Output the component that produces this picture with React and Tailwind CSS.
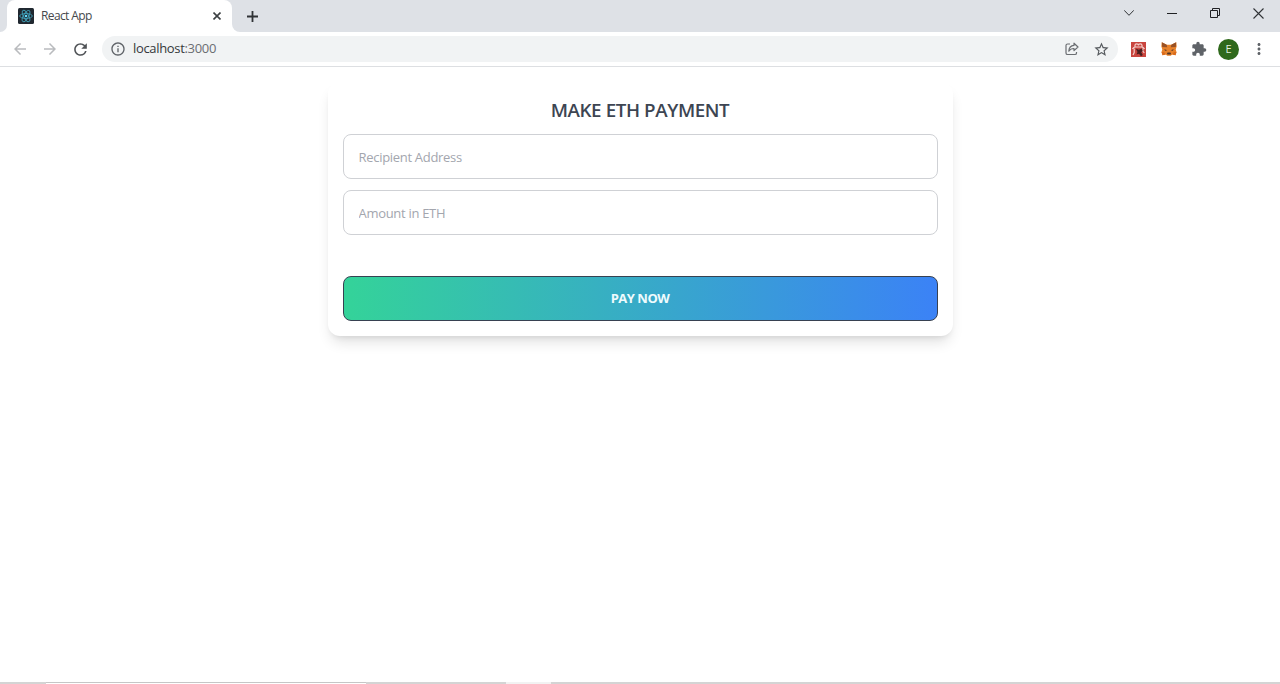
import {
  MdArrowBack, MdArrowForward, MdRefresh, MdInfoOutline, MdStarBorder,
  MdExtension, MdMoreVert,
} from "react-icons/md";

function ReactFavicon() {
  return (
    <svg width="16" height="16" viewBox="0 0 16 16" className="shrink-0">
      <rect width="16" height="16" rx="1.5" fill="#202830" />
      <g fill="none" stroke="#3f9db5" strokeWidth="0.9">
        <ellipse cx="8" cy="8" rx="6.3" ry="2.5" />
        <ellipse cx="8" cy="8" rx="6.3" ry="2.5" transform="rotate(60 8 8)" />
        <ellipse cx="8" cy="8" rx="6.3" ry="2.5" transform="rotate(120 8 8)" />
      </g>
      <circle cx="8" cy="8" r="1.3" fill="#61dafb" />
    </svg>
  );
}

function ShareIcon() {
  return (
    <svg width="14" height="14" viewBox="0 0 14 14" fill="none" stroke="#6a6d71" strokeWidth="1.2" strokeLinejoin="round">
      <path d="M5 2H2.6Q1 2 1 3.6v7.3q0 1.6 1.6 1.6h7.3q1.6 0 1.6-1.6V10" />
      <path d="M9 1.2 13 5 9 8.6V6.5C6.6 6.5 5 7.3 3.8 9.2 4 6 5.700 3.700 9 3.400Z" />
    </svg>
  );
}

function RedExtension() {
  return (
    <svg width="15" height="15" viewBox="0 0 15 15">
      <rect width="15" height="15" fill="#c9453e" />
      <g fill="none" stroke="#f3cfcb" strokeWidth="1.2">
        <path d="M4 5V3.300q0-1.500 1.700-1.500T7.500 3.500Q7.500 1.800 9.200 1.800T11 3.300V5" />
        <path d="M1.500 7q1-2 3-2h6q2 0 3 2M3.200 6.500v4l-1.200 2.500M11.800 6.500v2.500l1.500 2" />
      </g>
      <path d="m4.800 6.500 3 1.200 3.200-1.200.7 2.500-1.500 1.200 1.600 2.800-1.800 1.300-2-2.500-2.500.6 1-2.500Z" fill="#4a2020" />
    </svg>
  );
}

function FoxIcon() {
  return (
    <svg width="16" height="14" viewBox="0 0 16 14">
      <path d="m.8.3 4.900 2.400h4.600L15.200.3l.5 4-1 3.200.8 2.500-1 3.300-3.200-.8-1.600 1.200H6.300l-1.600-1.200-3.200.8-1-3.300.8-2.500-1-3.200Z" fill="#e8822b" />
      <path d="m.8.3 4.900 2.400.5 2.500-5-.2ZM15.200.3l-4.900 2.400-.5 2.500 5-.2Z" fill="#985125" />
      <path d="m3.300 7 3 1.200-2.200.8ZM12.700 7l-3 1.200 2.200.8Z" fill="#6e4429" />
      <path d="m6 11.200.7-.6h2.600l.7.600-.3 1.400H6.300Z" fill="#53392b" />
      <path d="m1.500 13.300 3.200-.8-1.500-2.300-2.700-.2ZM14.500 13.300l-3.200-.8 1.500-2.300 2.700-.2Z" fill="#d96b1d" />
    </svg>
  );
}

function TitleBar() {
  return (
    <div className="flex h-8 bg-[#dee1e6]">
      <div className="flex w-[7px] bg-white"><div className="w-full rounded-br-lg bg-[#dee1e6]" /></div>
      <div className="flex w-[225px] items-center rounded-t-lg bg-white pr-[11px] pl-[11px]">
        <ReactFavicon />
        <span className="ml-[7px] flex-1 text-[12px] tracking-[-0.62px] text-[#45484c]">React App</span>
        <svg width="8" height="8" viewBox="0 0 8 8" stroke="#3c4043" strokeWidth="1.600"><path d="m.5.5 7 7M7.500.5l-7 7" /></svg>
      </div>
      <div className="flex w-2 bg-white"><div className="w-full rounded-bl-lg bg-[#dee1e6]" /></div>
      <div className="flex w-[25px] items-center justify-center">
        <svg width="11" height="11" viewBox="0 0 11 11" stroke="#303336" strokeWidth="1.800"><path d="M5.500 0v11M0 5.500h11" /></svg>
      </div>
      <div className="flex flex-1 items-center justify-end gap-[33px] pr-4 pb-1.5">
        <svg width="10" height="10" viewBox="0 0 10 10" fill="none" stroke="#303336"><path d="m.2 2.300 4.800 5 4.800-5" /></svg>
        <svg width="10" height="10" viewBox="0 0 10 10" fill="none" stroke="#202124"><path d="M0 5.500h10" /></svg>
        <svg width="10" height="10" viewBox="0 0 10 10" fill="none" stroke="#202124"><path d="M.5 2.500h7v7h-7zM2.500 2.500v-2h7v7h-2" /></svg>
        <svg width="11" height="11" viewBox="0 0 11 11" fill="none" stroke="#303336" strokeWidth="1.100"><path d="m.5.5 10 10M10.500.5l-10 10" /></svg>
      </div>
    </div>
  );
}

function Toolbar() {
  return (
    <div className="flex h-[35px] items-center border-b border-[#dddfe2] bg-white pr-3">
      <div className="flex w-[102px] items-center gap-3 pl-[11px]">
        <MdArrowBack size={18} color="#b9bbbe" />
        <MdArrowForward size={18} color="#b9bbbe" />
        <MdRefresh size={19} color="#505357" />
      </div>
      <div className="flex h-[26px] w-[1017px] items-center rounded-full bg-[#f1f3f4] pr-2 pl-2">
        <MdInfoOutline size={16} color="#5f6368" />
        <span className="ml-[7px] flex-1 text-[13px] tracking-[-0.32px] text-[#35383b]">
          localhost<span className="text-[#6b6e72]">:3000</span>
        </span>
        <ShareIcon />
        <MdStarBorder size={17} color="#55595d" className="ml-[14px]" />
      </div>
      <div className="flex flex-1 items-center pl-[13px]">
        <RedExtension />
        <span className="ml-[15px]"><FoxIcon /></span>
        <MdExtension size={16} color="#5f6368" className="ml-[14px]" />
        <span className="ml-[11px] flex size-[21px] items-center justify-center rounded-full bg-[#2f691c] text-[11px] text-[#e3eedf]">E</span>
        <MdMoreVert size={18} color="#5f6368" className="ml-[11px]" />
      </div>
    </div>
  );
}

function Field({ placeholder }) {
  return (
    <input
      type="text"
      placeholder={placeholder}
      className="block h-[45px] w-full rounded-lg border border-[#cfd1d5] bg-white px-[15px] pt-px text-[13px] font-medium tracking-[-0.3px] placeholder:text-[#a3a6ae]"
    />
  );
}

export default function App() {
  return (
    <div className="flex h-[684px] w-full flex-col overflow-hidden bg-white font-['Open_Sans','Noto_Sans',sans-serif]">
      <TitleBar />
      <Toolbar />
      <main className="flex-1 pt-[15px]">
        <form className="mx-auto h-[254px] w-[625px] rounded-xl bg-white px-[15px] pt-[14px] shadow-[0_9px_14px_-3px_rgba(0,0,0,0.12),0_4px_6px_-4px_rgba(0,0,0,0.12)]">
          <h1 className="h-[38px] text-center text-[18.75px] leading-[28px] font-semibold tracking-[-0.4px] text-[#3d4552]">MAKE ETH PAYMENT</h1>
          <Field placeholder="Recipient Address" />
          <div className="h-[11px]" />
          <Field placeholder="Amount in ETH" />
          <button type="button" className="mt-[41px] block h-[45px] w-full rounded-lg border border-[#374151] bg-[linear-gradient(to_right,#34d399,#3b82f6)] pt-px text-[13px] font-bold tracking-[-0.5px] text-[#effbfd]">
            PAY NOW
          </button>
        </form>
      </main>
      <div className="flex h-0.5 bg-[#d4d4d4]">
        <div className="ml-[46px] w-[320px] border-t border-[#c6c6c6] bg-white" />
        <div className="ml-[140px] w-[45px] bg-[#f2f2f2]" />
      </div>
    </div>
  );
}
